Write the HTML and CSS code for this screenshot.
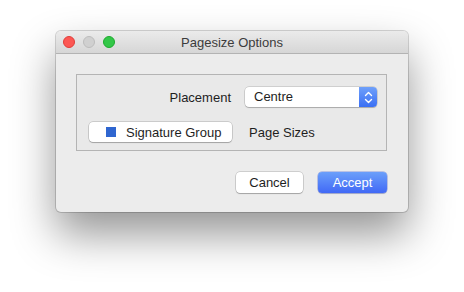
FILE: index.html
```html
<!DOCTYPE html>
<html lang="en">
<head>
    <meta charset="UTF-8">
    <title>Pagesize Options</title>
    <link rel="stylesheet" href="styles.css">
</head>
<body>
    <div class="window">
        <div class="titlebar">
            <div class="lights">
                <span class="light close"></span>
                <span class="light mini"></span>
                <span class="light zoom"></span>
            </div>
            <div class="title">Pagesize Options</div>
        </div>
        <div class="content">
            <div class="group">
                <div class="label right">Placement</div>
                <div class="popup">
                    <span class="popup-text">Centre</span>
                    <span class="popup-arrows">
                        <svg width="9" height="13" viewBox="0 0 9 13">
                            <path d="M1.5 4.5 L4.5 1.5 L7.5 4.5 M1.5 8.5 L4.5 11.5 L7.5 8.5" fill="none" stroke="#fff" stroke-width="1.4" stroke-linecap="round" stroke-linejoin="round"/>
                        </svg>
                    </span>
                </div>
                <button class="btn sig"><span class="swatch"></span>Signature Group</button>
                <div class="label page-sizes">Page Sizes</div>
            </div>
            <div class="actions">
                <button class="btn cancel">Cancel</button>
                <button class="btn accept">Accept</button>
            </div>
        </div>
    </div>
</body>
</html>
```

FILE: styles.css
```css
html {
    background: #ffffff;
}
body {
    margin: 0;
    min-height: 292px;
    box-sizing: border-box;
    padding: 31px 0 0 56px;
    font-family: "Liberation Sans", Arial, sans-serif;
    font-size: 13px;
    color: #1e1e1e;
}
.window {
    width: 352px;
    height: 181px;
    box-sizing: border-box;
    background: #ececec;
    border-radius: 5px;
    overflow: hidden;
    box-shadow: 0 0 0 1px rgba(0, 0, 0, 0.16), 0 22px 44px rgba(0, 0, 0, 0.42);
}
.titlebar {
    height: 23px;
    box-sizing: border-box;
    display: flex;
    align-items: center;
    position: relative;
    background: linear-gradient(#ebebeb, #d6d6d6);
    border-bottom: 1px solid #b3b3b3;
}
.lights {
    display: flex;
    gap: 8px;
    padding-left: 7px;
    position: absolute;
    top: 5px;
}
.light {
    width: 12px;
    height: 12px;
    border-radius: 50%;
    box-sizing: border-box;
}
.close {
    background: #fc5753;
    border: 1px solid #df3d39;
}
.mini {
    background: #d0d0d0;
    border: 1px solid #bcbcbc;
}
.zoom {
    background: #33c748;
    border: 1px solid #1daa2e;
}
.title {
    flex: 1;
    text-align: center;
    color: #3c3c3c;
    font-size: 13px;
}
.content {
    padding: 20px 21px 0 20px;
}
.group {
    box-sizing: border-box;
    width: 311px;
    height: 77px;
    border: 1px solid #b4b4b4;
    background: #e9e9e9;
    padding: 12px 9px 0 12px;
    display: grid;
    grid-template-columns: 143px 132px;
    grid-auto-rows: 20px;
    column-gap: 13px;
    row-gap: 15px;
    align-items: center;
}
.label.right {
    text-align: right;
    padding-right: 1px;
}
.page-sizes {
    padding-left: 4px;
}
.popup {
    height: 20px;
    display: flex;
    align-items: stretch;
    background: #fff;
    border-radius: 4px;
    box-shadow: 0 0 0 0.5px rgba(0, 0, 0, 0.22), 0 1px 1px rgba(0, 0, 0, 0.18);
    overflow: hidden;
}
.popup-text {
    flex: 1;
    padding-left: 9px;
    line-height: 20px;
}
.popup-arrows {
    width: 18px;
    display: flex;
    align-items: center;
    justify-content: center;
    background: linear-gradient(#6fa0fa, #3a6ff4);
}
.btn {
    font-family: inherit;
    font-size: 13px;
    height: 20px;
    padding: 0;
    border: none;
    border-radius: 4px;
    background: #fff;
    color: #1e1e1e;
    box-shadow: 0 0 0 0.5px rgba(0, 0, 0, 0.25), 0 1px 1px rgba(0, 0, 0, 0.2);
}
.sig {
    display: flex;
    align-items: center;
    padding-left: 17px;
}
.swatch {
    width: 10px;
    height: 10px;
    background: #2f66d0;
    margin-right: 10px;
}
.actions {
    display: flex;
    justify-content: flex-end;
    gap: 15px;
    padding-top: 21px;
    width: 311px;
}
.cancel {
    width: 67px;
    height: 21px;
}
.accept {
    width: 69px;
    height: 21px;
    color: #fff;
    background: linear-gradient(#6b9ffa, #4169f6);
    box-shadow: 0 0 0 0.5px rgba(40, 70, 200, 0.5), 0 1px 1px rgba(0, 0, 0, 0.15);
}
```
